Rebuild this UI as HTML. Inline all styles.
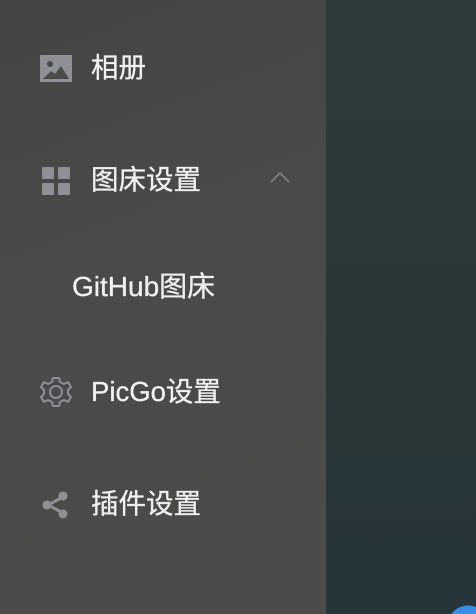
<!DOCTYPE html>
<html><head><meta charset="utf-8"><style>
html,body{margin:0;width:476px;height:614px;overflow:hidden}
body{background:#2a3838;font-family:"Liberation Sans","Noto Sans CJK SC",sans-serif;position:relative}
.side{position:absolute;left:0;top:0;width:326px;height:614px;background:linear-gradient(160deg,#444 0%,#4a4a4a 40%,#4b4b4a 100%)}
.main{position:absolute;left:326px;top:0;width:150px;height:614px;background:radial-gradient(circle at 142px 626px,#3a8ee6 0,#3a8ee6 20px,transparent 21px),linear-gradient(180deg,#2d3b3b,#283636 60%,#26353a)}
.it{position:absolute;left:91px;color:#f0f0f0;font-size:27.5px;line-height:30px;-webkit-text-stroke:0.3px #f0f0f0}
.ic{position:absolute}
</style></head><body>
<div class="side"></div><div class="main"></div>
<svg class="ic" style="left:40px;top:55px" width="32" height="28" viewBox="0 0 32 28"><rect width="32" height="27" fill="#8e9096"/><circle cx="10" cy="9" r="3" fill="#4a4a4a"/><path d="M3 24 L11 16 L15 19 L21 11 L29 24Z" fill="#4a4a4a"/></svg>
<div class="it" style="top:53px">相册</div>
<svg class="ic" style="left:42px;top:167px" width="28" height="28"><rect x="0" y="0" width="12" height="12" rx="1" fill="#8e9096"/><rect x="16" y="0" width="12" height="12" rx="1" fill="#8e9096"/><rect x="0" y="16" width="12" height="12" rx="1" fill="#8e9096"/><rect x="16" y="16" width="12" height="12" rx="1" fill="#8e9096"/></svg>
<div class="it" style="top:165px">图床设置</div>
<svg class="ic" style="left:270px;top:171px" width="20" height="12"><path d="M1 11 L10 2 L19 11" fill="none" stroke="#888" stroke-width="1.5"/></svg>
<div class="it" style="left:72px;top:272px;font-size:28px">GitHub图床</div>
<svg class="ic" style="left:40px;top:376px" width="32" height="32" viewBox="0 0 32 32"><path d="M13 2h6l1 4 4 2 4-2 3 5-3 3v4l3 3-3 5-4-2-4 2-1 4h-6l-1-4-4-2-4 2-3-5 3-3v-4l-3-3 3-5 4 2 4-2z" fill="none" stroke="#8e9096" stroke-width="2" stroke-linejoin="round"/><circle cx="16" cy="16" r="6" fill="none" stroke="#8e9096" stroke-width="2"/></svg>
<div class="it" style="top:377px">PicGo设置</div>
<svg class="ic" style="left:41px;top:491px" width="30" height="28"><path d="M22 6 L7 14 L22 22" fill="none" stroke="#8e9096" stroke-width="3"/><circle cx="22" cy="5" r="4.5" fill="#8e9096"/><circle cx="6" cy="14" r="4.5" fill="#8e9096"/><circle cx="22" cy="23" r="4.5" fill="#8e9096"/></svg>
<div class="it" style="top:489px">插件设置</div>
</body></html>
